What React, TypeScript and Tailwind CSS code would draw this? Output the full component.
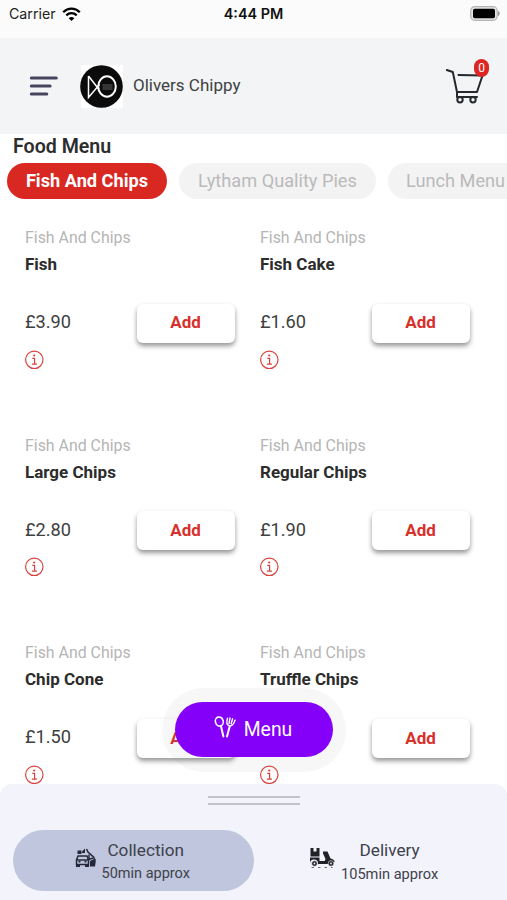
import React from "react";

type Item = { name: string; price: string };

const rows: Item[][] = [
  [{ name: "Fish", price: "£3.90" }, { name: "Fish Cake", price: "£1.60" }],
  [{ name: "Large Chips", price: "£2.80" }, { name: "Regular Chips", price: "£1.90" }],
  [{ name: "Chip Cone", price: "£1.50" }, { name: "Truffle Chips", price: "" }],
];

function StatusBar() {
  return (
    <div className="flex h-[38px] shrink-0 items-start justify-between bg-[#fbfbfb] pt-[4px] pl-[9px] pr-[7px] font-['Inter',sans-serif]">
      <div className="flex w-[190px] items-center gap-[6px]">
        <span className="text-[14.2px] leading-5 text-[#222]">Carrier</span>
        <svg width="19" height="14" viewBox="0 0 19 14" className="mb-[1px]" fill="none" stroke="#000" strokeWidth="2.3">
          <path d="M1.2 5.2C6 .5 13 .5 17.8 5.2" />
          <path d="M4.3 8.3c3-2.8 7.400-2.800 10.400 0" />
          <path d="M9.500 14 6.700 11.200c1.600-1.500 4-1.500 5.600 0z" fill="#000" stroke="none" />
        </svg>
      </div>
      <span className="-ml-[2px] text-[14.4px] leading-5 font-semibold text-[#111]">4:44 PM</span>
      <div className="flex w-[190px] justify-end pt-[2px]">
        <svg width="30" height="15" viewBox="0 0 30 15">
          <rect x=".7" y=".7" width="26.5" height="13.600" rx="4" fill="#e4e4e4" stroke="#b4b4b4" strokeWidth="1.200" />
          <rect x="3" y="2.800" width="22" height="9.400" rx="1.800" fill="#000" />
          <path d="M28 5c2.300.5 2.300 4.500 0 5z" fill="#999" />
        </svg>
      </div>
    </div>
  );
}

function Logo() {
  return (
    <svg className="ml-[22px]" width="44" height="43" viewBox="0 0 44 43">
      <rect x="1" width="42" height="43" fill="#fff" />
      <circle cx="21.500" cy="21.500" r="21.300" fill="#0b0b0b" />
      <g fill="none" stroke="#fff">
        <path d="M8.500 11v21.500L19.500 19.500M8.500 11l10.500 13.500" strokeWidth="1.500" />
        <ellipse cx="27" cy="21.500" rx="8.800" ry="10.200" strokeWidth="2" />
        <path d="M22.500 20h10M22.500 22h10M22.500 24h10" stroke="#777" strokeWidth=".8" />
      </g>
    </svg>
  );
}

function Cart() {
  return (
    <div className="relative h-[46px] w-[44px]">
      <svg width="44" height="46" viewBox="0 0 44 46" fill="none" stroke="#25282c" strokeWidth="2" strokeLinecap="round" strokeLinejoin="round">
        <path d="M.8 11 6.800 13 11 33h20l5.500-16.500L12.500 16" />
        <path d="M11 33v5h20" />
        <circle cx="14" cy="40.800" r="2.700" />
        <circle cx="27" cy="40.800" r="2.700" />
      </svg>
      <span className="absolute top-0 left-[28px] flex h-[18px] w-[15px] items-center justify-center rounded-full bg-[#dc2623] text-[12px] text-white">0</span>
    </div>
  );
}

function Header() {
  return (
    <header className="flex h-[96px] shrink-0 items-center bg-[#f2f4f6] pr-[17px] pl-[29px]">
      <svg width="29" height="22" viewBox="0 0 29 22" stroke="#46445f" strokeWidth="3" strokeLinecap="round">
        <path d="M2.300 3h25M2.300 11h18.800M2.300 19h15.500" />
      </svg>
      <Logo />
      <span className="ml-[9px] text-[17px] text-[#414141]">Olivers Chippy</span>
      <div className="ml-auto pb-[8px]"><Cart /></div>
    </header>
  );
}

function InfoIcon() {
  return (
    <svg width="20" height="20" viewBox="0 0 20 20" fill="none" stroke="#d9413c" strokeWidth="1.200">
      <circle cx="10.300" cy="9.800" r="8.700" />
      <path d="M8.300 8.300h2.300v5.500M7.900 14.100h5" />
      <circle cx="10.200" cy="5.500" r="1.100" fill="#d9413c" stroke="none" />
    </svg>
  );
}

function Card({ item }: { item: Item }) {
  return (
    <article className="w-[235px] shrink-0">
      <p className="h-[26px] text-[15.900px] leading-[26px] text-[#b5b5b5]">Fish And Chips</p>
      <h2 className="h-[27px] text-[17px] leading-[27px] font-bold text-[#2c2c2c]">{item.name}</h2>
      <div className="mt-[25px] flex h-[40px] items-center">
        <span className="w-[112px] pb-[2px] text-[18.200px] leading-[24px] text-[#404040]">{item.price}</span>
        <button className="h-[39px] w-[98px] rounded-[6px] bg-white text-[17px] font-bold text-[#d8302c] shadow-[0_3px_5px_rgba(0,0,0,0.42)]">
          <span className="-ml-[1px]">Add</span>
        </button>
      </div>
      <div className="-ml-[1px] mt-[6.500px]"><InfoIcon /></div>
    </article>
  );
}

function Cutlery() {
  return (
    <svg width="24" height="24" viewBox="0 0 24 24" fill="none" stroke="#fff" strokeWidth="1.600" strokeLinecap="round" strokeLinejoin="round">
      <ellipse cx="5.300" cy="6.500" rx="3.900" ry="4.600" transform="rotate(-18 5.300 6.500)" />
      <path d="m7 11.300 2.400 10.200" strokeWidth="2" />
      <path d="M13.500 3.200c-1.200 4-1 6.600 1.500 7.500 2.600.8 4.800-1.500 6-5.500M16 3l-1 5.500M18.600 3.800l-1.500 5" strokeWidth="1.400" />
      <path d="M15.800 11 13 21.500" strokeWidth="2" />
    </svg>
  );
}

function CarIcon() {
  return (
    <svg width="22" height="20" viewBox="0 0 22 20" fill="none" stroke="#24283a" strokeWidth="1.500">
      <path d="M3 8h9l1.500 4v4.500H1.500V12zM1.500 12h12" />
      <path d="M3.500 13.800h2M9.500 13.800h2" />
      <path d="M1 16h4v3H1zM10 16h4v3h-4zM2.500 2.500h4V6h-4z" fill="#24283a" stroke="none" />
      <path d="m7 3.500 3-3v4.500H7z" fill="#24283a" stroke="none" />
      <path d="m11.500 1 1.500 3 5.500 5 1.500 3" />
      <path d="M14 6.500v5l4-1.500" />
      <path d="M15 13l5-2.500.8 2.500-.8 5.500h-5z" fill="#24283a" stroke="none" />
    </svg>
  );
}

function ScooterIcon() {
  return (
    <svg width="26" height="22" viewBox="0 0 26 22" fill="#202226">
      <path d="M1.500 1h3v3.500h3V1h3v8.500h-9zM1 10.500h9.500V14h5.200l.8-2-2.500-5.500V4.500h4.500l3 7c2.500.4 4 1.800 4.200 3.500L20 17H9a4 4 0 0 0-8-1z" />
      <circle cx="5.500" cy="16.500" r="2.800" stroke="#f1f3fb" strokeWidth=".6" />
      <circle cx="22" cy="16.500" r="2.800" stroke="#f1f3fb" strokeWidth=".6" />
      <circle cx="5.500" cy="16.500" r=".9" fill="#f1f3fb" />
      <circle cx="22" cy="16.500" r=".9" fill="#f1f3fb" />
      <path d="M2.500 20.500h21" stroke="#6b6e78" strokeDasharray="2.500 4" />
    </svg>
  );
}

function BottomSheet() {
  return (
    <footer className="relative flex h-[116px] shrink-0 flex-col items-center rounded-t-[12px] bg-[#f2f3fb] pt-[12px]">
      <div className="flex w-[92px] flex-col gap-[5px]">
        <div className="h-[2px] bg-[#c2c3c8]" />
        <div className="h-[2px] bg-[#c2c3c8]" />
      </div>
      <div className="mt-[25px] flex w-full pl-[13px] text-[#3e414b]">
        <button className="flex h-[61px] w-[241px] items-center rounded-full bg-[#bfc6dd] pl-[62px]">
          <span className="pb-[5px]"><CarIcon /></span>
          <span className="ml-[4.500px] flex flex-col items-center pt-[2px]">
            <span className="text-[17.200px] leading-[24px]">Collection</span>
            <span className="text-[14.500px] leading-[24px]">50min approx</span>
          </span>
        </button>
        <button className="flex h-[61px] w-[241px] items-center pl-[55px]">
          <span className="pb-[5px]"><ScooterIcon /></span>
          <span className="ml-[6px] flex flex-col items-center pt-[2px]">
            <span className="text-[17.200px] leading-[24px]">Delivery</span>
            <span className="text-[14.600px] leading-[24px]">105min approx</span>
          </span>
        </button>
      </div>
    </footer>
  );
}

export default function App() {
  return (
    <div className="flex h-[900px] w-[507px] flex-col overflow-hidden bg-white font-['Roboto',sans-serif]">
      <StatusBar />
      <Header />
      <main className="relative h-[650px] shrink-0">
        <h1 className="h-[29px] pl-[13px] text-[19.600px] leading-[25px] font-semibold text-[#2d2d2d]">Food Menu</h1>
        <nav className="flex h-[36px] gap-[12px] overflow-hidden pl-[7px] text-[18.200px] leading-[35px] whitespace-nowrap text-[#bababa]">
          <span className="w-[160px] shrink-0 rounded-full bg-[#d92722] text-center font-bold text-white">Fish And Chips</span>
          <span className="w-[197px] shrink-0 rounded-full bg-[#f3f3f3] text-center">Lytham Quality Pies</span>
          <span className="w-[140px] shrink-0 rounded-full bg-[#f3f3f3] pl-[18px]">Lunch Menu</span>
        </nav>
        <div className="h-[585px] overflow-hidden pt-[26px] pl-[25px]">
          {rows.map((row) => (
            <div key={row[0].name} className="flex h-[207.700px]">
              {row.map((item) => <Card key={item.name} item={item} />)}
            </div>
          ))}
        </div>
        <div className="absolute top-[554px] left-[162px] rounded-full bg-[#8a8a8a]/7 p-[13px] pt-[14px] pb-[15px]">
          <button className="flex h-[55px] w-[158px] items-center justify-center gap-[6px] rounded-full bg-[#8500f8] pr-[2px] text-[19.400px] text-white">
            <span className="pb-[6px]"><Cutlery /></span>
            <span>Menu</span>
          </button>
        </div>
      </main>
      <BottomSheet />
    </div>
  );
}
